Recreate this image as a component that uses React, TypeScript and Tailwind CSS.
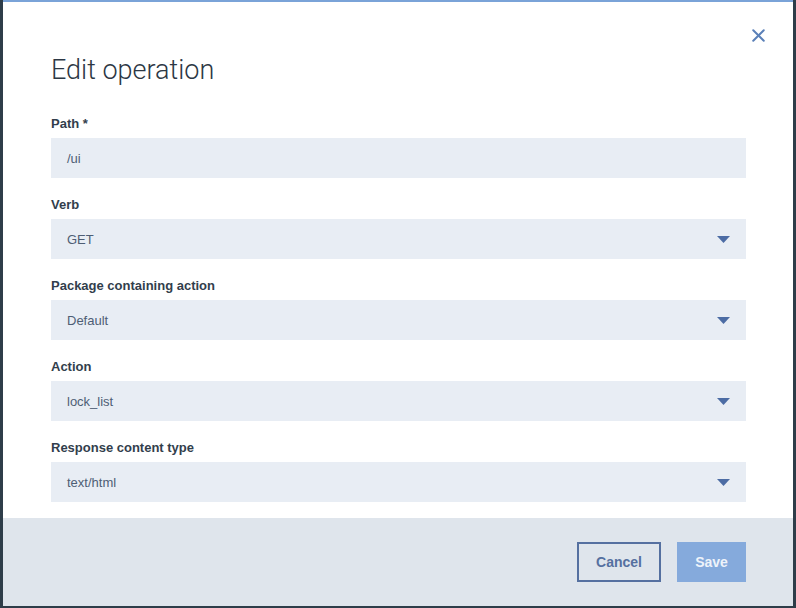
import { X } from 'lucide-react'

interface FieldProps {
  label: string
  value: string
  select?: boolean
}

function Field({ label, value, select }: FieldProps) {
  return (
    <div className="mb-[18px] last:mb-0">
      <div className="mb-[7px] pt-px text-[13px] font-bold leading-[15px] text-[#323e4c]">{label}</div>
      <div className="flex h-10 items-center justify-between bg-[#e8edf4] pl-4 pr-4">
        <span className="pt-[2px] text-[13px] text-[#4e5e74]">{value}</span>
        {select && (
          <svg width="13" height="7" viewBox="0 0 13 7" className="text-[#4c6ca4]">
            <path d="M0 0 L13 0 L6.5 7 Z" fill="currentColor" />
          </svg>
        )}
      </div>
    </div>
  )
}

export default function App() {
  return (
    <div className="flex h-[608px] w-[796px] bg-[#2e3d49] pb-[2px] pl-[3px] pr-[3px] font-['Liberation_Sans',Arial,sans-serif]">
      <div className="flex flex-1 flex-col bg-white">
        <div className="h-[2px] bg-[#7aa3d8]" />
        <div className="relative flex-1 pl-12 pr-[47px] pt-[53px]">
          <button className="absolute right-[24px] top-[23px] text-[#5b80b8]">
            <X size={21} strokeWidth={2.3} />
          </button>
          <h1 className="mb-[30px] font-['Roboto',sans-serif] text-[27px] font-light leading-[30px] text-[#2c3744]">
            Edit operation
          </h1>
          <Field label="Path *" value="/ui" />
          <Field label="Verb" value="GET" select />
          <Field label="Package containing action" value="Default" select />
          <Field label="Action" value="lock_list" select />
          <Field label="Response content type" value="text/html" select />
        </div>
        <div className="flex h-[88px] items-center justify-end gap-4 bg-[#dfe5ec] pr-[47px]">
          <button className="h-10 w-[84px] border-2 border-[#5570a0] text-[14px] font-bold text-[#5570a0]">
            Cancel
          </button>
          <button className="h-10 w-[69px] bg-[#85aadc] text-[14px] font-bold text-[#eef3fa]">Save</button>
        </div>
      </div>
    </div>
  )
}
